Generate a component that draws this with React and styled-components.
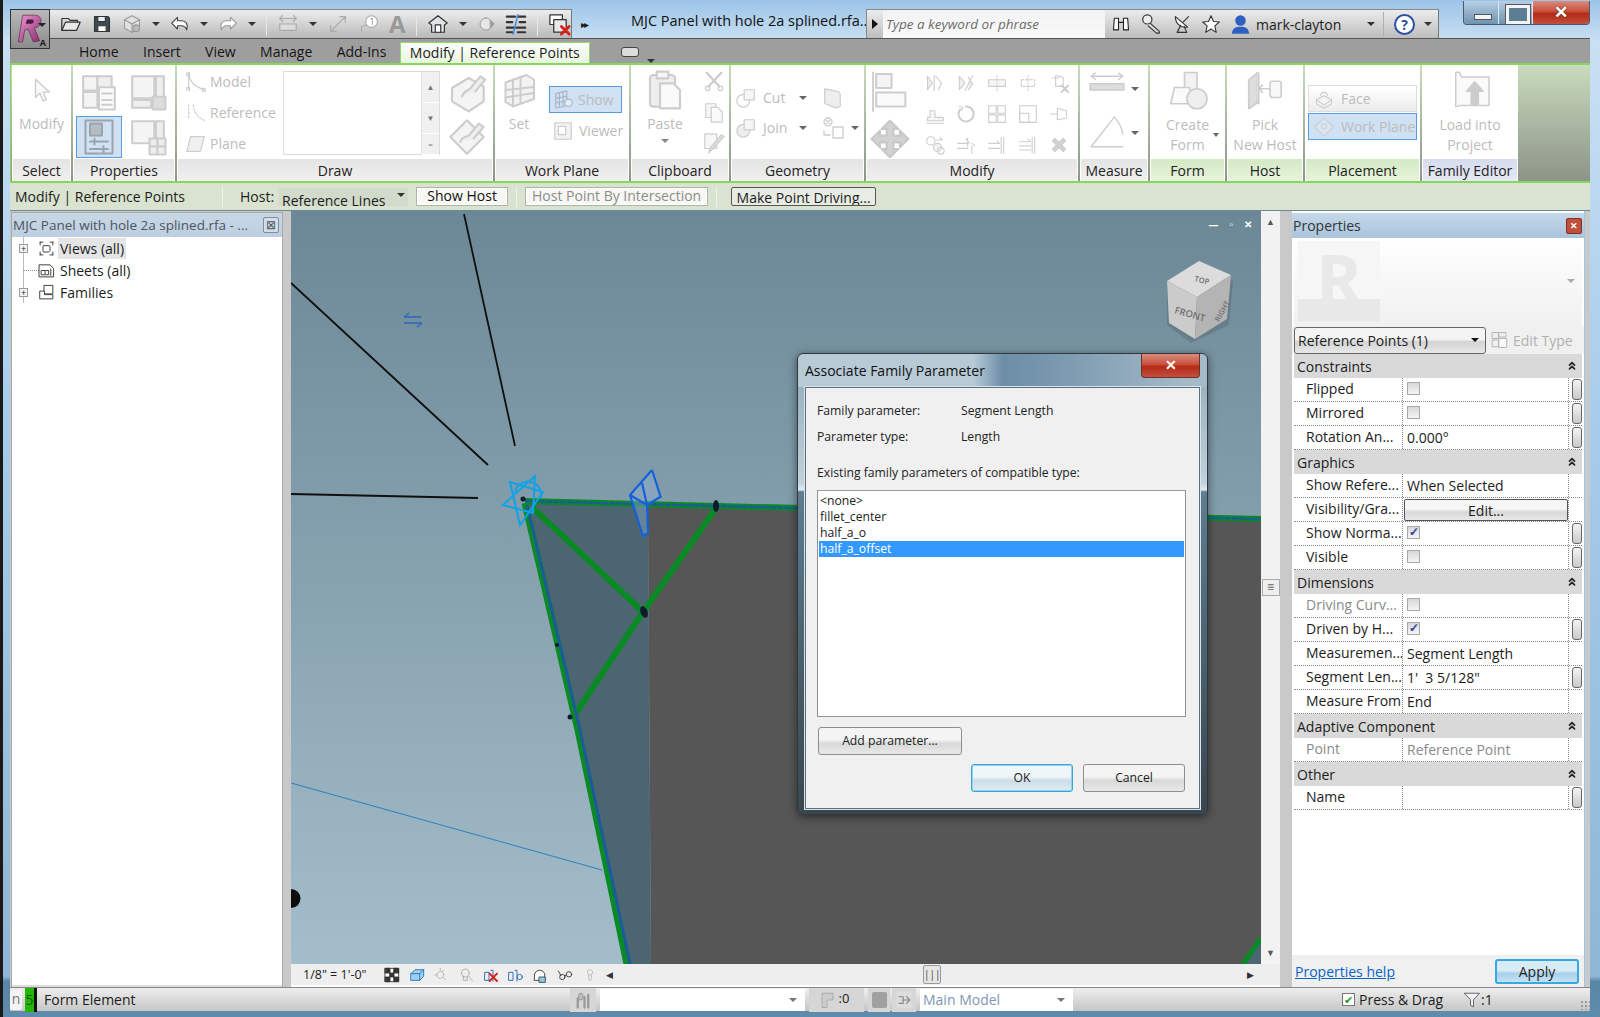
import React from 'react';
import styled, {createGlobalStyle} from 'styled-components';

const Global = createGlobalStyle`
    html, body {
        margin: 0;
        padding: 0;
        background: #6f93ad;
    }
    * {
        box-sizing: border-box;
    }
`

const FONT = '"Open Sans", "Liberation Sans", sans-serif'

const paths = {
    folder: <><path d="M2 19V6h7l2 2h8v3" /><path d="M2 19l4-9h16l-4 9z" fill="#e9e9e9" /></>,
    save: <><path d="M3 3h16l2 2v16H3z" fill="#3d4a52" /><rect x="7" y="3" width="9" height="6" fill="#e8eef2" /><rect x="7" y="14" width="10" height="7" fill="#fff" /></>,
    cube: <><path d="M12 2l9 5v10l-9 5-9-5V7z" fill="#e2e2e2" /><path d="M3 7l9 5 9-5M12 12v10" /><circle cx="17" cy="17" r="4" fill="#bbb" /></>,
    undo: <path d="M9 4L2 11l7 7v-4h5c3 0 5 2 6 5 2-7-1-11-6-11H9z" fill="#fff" />,
    redo: <path d="M15 4l7 7-7 7v-4h-5c-3 0-5 2-6 5-2-7 1-11 6-11h5z" fill="#fff" />,
    dimension: <><path d="M3 6h18M3 6l3-3M3 6l3 3M21 6l-3-3M21 6l-3 3" /><rect x="3" y="12" width="18" height="7" fill="#ddd" /></>,
    diagonal: <><path d="M4 20L20 4M20 4h-6M20 4v6M4 20h6M4 20v-6" /></>,
    tag: <><circle cx="15" cy="9" r="7" fill="#fff" /><path d="M9 13l-6 2v6M14 6l2-1v8" /></>,
    house: <><path d="M2 11l10-8 10 8-3 2v8H5v-8z" fill="#dfe3e6" /><rect x="9" y="13" width="6" height="8" fill="#fff" /></>,
    diamond: <><path d="M12 4a8 8 0 1 0 .1 0z" fill="#e6e6e6" /><path d="M18 7l5 5-5 5z" fill="#999" /></>,
    thin: <><path d="M2 4h9M2 10h6M2 16h9M2 21h6M14 4h8M16 10h6M13 16h9M14 21h8" strokeWidth="2.4" /><path d="M14 2L9 23" stroke="#4a90e2" strokeWidth="1.8" /></>,
    closeAll: <><rect x="2" y="2" width="13" height="10" fill="#fff" /><rect x="6" y="7" width="13" height="13" fill="#e8e8e8" /><path d="M14 14l8 8M22 14l-8 8" stroke="#d8201c" strokeWidth="3" /></>,
    binoculars: <><path d="M4 5h5v14H3zM15 5h5l1 14h-6z" fill="#fff" /><path d="M9 10h6" /></>,
    key: <><circle cx="8" cy="7" r="5" fill="#eee" /><path d="M11 11l10 9v2h-3l-9-8" fill="#ddd" /></>,
    dish: <><path d="M5 3c0 8 6 13 14 12z" fill="#fff" /><path d="M11 13l-4 8h11l-3-7M14 9l6-6" /></>,
    star: <path d="M12 2l3 7 7 .6-5.400 4.700L18.300 22 12 18l-6.300 4 1.700-7.700L2 9.600 9 9z" fill="#fff" />,
    cursor: <path d="M6 2v17l4-4 3 7 3-1-3-7h6z" fill="#fafafa" />,
    typeProps: <><rect x="2" y="2" width="9" height="9" fill="#f4f4f4" /><rect x="11" y="2" width="9" height="9" fill="#eee" /><rect x="2" y="12" width="9" height="10" fill="#f4f4f4" /><rect x="12" y="9" width="10" height="14" fill="#fafafa" /><path d="M14 13h6M14 17h6M14 20h6" /></>,
    panels: <><rect x="2" y="2" width="14" height="14" fill="#f4f4f4" /><rect x="17" y="2" width="5" height="14" fill="#eee" /><rect x="2" y="17" width="12" height="5" fill="#eee" /><rect x="15" y="15" width="8" height="8" fill="#ddd" /></>,
    activeProps: <><rect x="3" y="1" width="18" height="22" fill="#cfe1f3" /><rect x="6" y="3" width="8" height="8" fill="#b4bcc4" /><path d="M6 15h12M9 13v4M6 20h12M15 18v4" stroke="#9aa4ac" /></>,
    panelsGrid: <><rect x="2" y="2" width="14" height="14" fill="#f4f4f4" /><rect x="17" y="2" width="5" height="14" fill="#eee" /><rect x="13" y="13" width="5" height="5" fill="#eee" /><rect x="18" y="13" width="5" height="5" fill="#eee" /><rect x="13" y="18" width="5" height="5" fill="#eee" /><rect x="18" y="18" width="5" height="5" fill="#eee" /></>,
    model: <><path d="M4 3v16M4 3c1 9 6 14 16 17" /><rect x="2" y="2" width="3" height="3" /><rect x="2" y="18" width="3" height="3" /><rect x="19" y="19" width="3" height="3" /></>,
    reference: <><path d="M4 3v16M9 3c1 9 5 14 12 17" strokeDasharray="2 2" /></>,
    plane: <path d="M6 4h15l-4 16H2z" fill="#f0f0f0" strokeDasharray="3 1" />,
    solidPen: <><path d="M3 9l10-6 9 5v9l-9 6-10-6z" fill="#f4f4f4" /><path d="M9 14c2-5 5-3 6-6l5-6 3 2-6 7" fill="#eee" /></>,
    planePen: <><path d="M12 2l10 10-10 10L2 12z" fill="#f4f4f4" /><path d="M8 15c2-5 5-2 6-5l5-6 3 2-6 7" fill="#eee" /></>,
    gridSet: <><path d="M3 7l14-5 5 3v13L8 23l-5-3z" fill="#f2f2f2" /><path d="M8 5v18M13 3v18M3 12l19-2M3 17l19-3" /></>,
    gridShow: <><path d="M3 5l12-3v16L3 21z" fill="#cfe0f0" /><path d="M7 4v16M11 3v16M3 10l12-2M3 15l12-2" /><circle cx="17" cy="15" r="4" fill="#e6eef5" /></>,
    viewer: <><rect x="3" y="3" width="18" height="18" fill="#f2f2f2" /><rect x="7" y="7" width="8" height="9" fill="#fff" /></>,
    paste: <><rect x="3" y="3" width="15" height="19" rx="2" fill="#eee" /><rect x="7" y="1" width="7" height="4" fill="#f6f6f6" /><path d="M9 8h8l4 4v11H9z" fill="#fafafa" /></>,
    cut: <><path d="M4 3l14 15M20 3L6 18" strokeWidth="2.600" /><circle cx="5" cy="20" r="2.500" /><circle cx="19" cy="20" r="2.500" /></>,
    copy: <><rect x="3" y="3" width="11" height="15" fill="#f6f6f6" /><path d="M9 7h7l5 5v11H9z" fill="#fafafa" /></>,
    brush: <><rect x="2" y="2" width="13" height="16" fill="#f6f6f6" /><path d="M23 5L11 18l-5 5 2-6L20 3z" fill="#ddd" /></>,
    cutGeo: <><circle cx="9" cy="15" r="7" fill="#fff" /><rect x="10" y="3" width="11" height="11" fill="#f6f6f6" /></>,
    joinGeo: <><circle cx="9" cy="15" r="7" fill="#eee" /><rect x="10" y="3" width="11" height="11" fill="#f6f6f6" /></>,
    wallFace: <path d="M4 2l15 3 2 3v13l-4 2-13-5z" fill="#eee" />,
    split: <><circle cx="7" cy="6" r="4" fill="#fff" /><path d="M5 4l4 4M9 4l-4 4" /><rect x="12" y="11" width="10" height="11" fill="#fff" /><path d="M3 15v4h6" /></>,
    alignBig: <><path d="M2 1v25" strokeWidth="1.200" /><rect x="4" y="2" width="10" height="9" fill="#f4f4f4" /><rect x="4" y="14" width="19" height="9" fill="#fafafa" /></>,
    move: <path d="M12 1l5 5h-3v4h4V7l5 5-5 5v-3h-4v4h3l-5 5-5-5h3v-4H6v3l-5-5 5-5v3h4V6H7z" fill="#d2d2d2" />,
    mirrorA: <><path d="M11 3v18M3 4l6 8-6 8z" fill="#eee" /><path d="M13 4l7 8-4 8" /></>,
    mirrorB: <><path d="M4 4l7 8-7 8zM20 3L11 21M15 5l5 8-5 7" fill="#eee" /></>,
    splitDash: <><rect x="2" y="8" width="20" height="8" fill="#f6f6f6" /><path d="M12 3v18" strokeDasharray="2 2" /></>,
    splitDot: <><rect x="4" y="8" width="16" height="8" strokeDasharray="3 2" /><path d="M12 3v18" strokeDasharray="2 2" /></>,
    unpin: <><path d="M4 6h8M8 3l9 2v11l-9 0z" fill="#fff" /><path d="M15 15l8 8M23 15l-8 8" strokeWidth="2.400" /></>,
    offset: <><path d="M3 20h19v-4H12v-8H6v8H3z" fill="#f6f6f6" /><path d="M2 23h20" /></>,
    rotate: <><path d="M12 3a9 9 0 1 1-7 3.500" strokeWidth="2.400" /><path d="M4 3l4 1-1 4" /></>,
    array: <><rect x="2" y="2" width="9" height="9" /><rect x="13" y="2" width="9" height="9" /><rect x="2" y="13" width="9" height="9" /><rect x="13" y="13" width="9" height="9" /></>,
    scale: <><rect x="2" y="2" width="20" height="20" /><rect x="2" y="11" width="11" height="11" /></>,
    pin: <><path d="M2 12h8M10 5l11 3v9l-11 2z" fill="#fff" /></>,
    circles: <><circle cx="7" cy="7" r="5" /><circle cx="15" cy="15" r="5" fill="#f2f2f2" /><circle cx="19" cy="19" r="4" /><path d="M14 6h7l-3-3" /></>,
    trimA: <><path d="M2 10h12M2 16h12M12 4l4 6M19 13v9M14 4v10M23 13l-4-3" /></>,
    trimB: <><path d="M20 3v19M17 3v19M2 10h13l-3-3M2 16h13" /></>,
    trimC: <><path d="M20 3v19M17 3v19M2 8h13l-3-3M2 13h13M2 18h13" /></>,
    remove: <path d="M4 7l3-3 5 5 5-5 3 3-5 5 5 5-3 3-5-5-5 5-3-3 5-5z" fill="#d2d2d2" />,
    measure: <><path d="M2 5h30M2 5l4-3M2 5l4 3M32 5l-4-3M32 5l-4 3" /><rect x="1" y="12" width="32" height="6" fill="#ddd" /></>,
    angle: <><path d="M2 30h30M2 30L24 2" /><path d="M24 2c5 5 7 11 8 16" /></>,
    form: <><rect x="14" y="2" width="10" height="15" fill="#f2f2f2" /><path d="M3 27l3-13h12l3 13z" fill="#fafafa" /><circle cx="24" cy="23" r="8" fill="#efefef" /></>,
    host: <><path d="M3 8l7-6v24l-7 5z" fill="#ddd" /><path d="M10 2l1 1v24l-1-1" fill="#eee" /><rect x="20" y="9" width="9" height="13" rx="2" fill="#f8f8f8" /><path d="M20 15h-9l3-3M11 15l3 3" /></>,
    faceIcon: <><path d="M3 13l9-5 9 5-9 6z" fill="#f4f4f4" /><path d="M3 13v5l9 5 9-5v-5M8 8a4 4 0 0 1 8 0" /></>,
    planeIcon: <><path d="M12 1l11 11-11 11L1 12z" fill="#d8e6f4" /><circle cx="12" cy="11" r="3" /></>,
    load: <><path d="M4 1h3l2 4h23v24H8l-4 1z" fill="#fafafa" /><path d="M20 9l7 8h-4v11h-6V17h-4z" fill="#ccc" /></>,
    shadow: <><rect x="2" y="2" width="20" height="20" fill="#fff" /><path d="M2 2h7v7H2zM15 2h7v7h-7zM9 9h6v6H9zM2 15h7v7H2zM15 15h7v7h-7z" fill="#333" /></>,
    box3d: <><path d="M3 10l6-6h13v10l-6 6H3z" fill="#9fd0ee" /><path d="M3 10h13v10M16 10l6-6" /></>,
    sun: <><circle cx="11" cy="12" r="5" strokeDasharray="2 2" /><path d="M11 2v3M3 12h3M16 5l-2 2M19 19l-3-3" /></>,
    bulb: <><circle cx="11" cy="9" r="6" /><path d="M8 14v6h6v-6M16 14l6 7" strokeDasharray="2 1" /></>,
    tempHide: <><path d="M3 8h6v12H3zM12 5h3v16" stroke="#1c5fb0" /><path d="M10 10l11 11M21 10L10 21" stroke="#d8201c" strokeWidth="3" /></>,
    revealHide: <><path d="M3 8h6v12H3zM12 5h3v16" stroke="#1c5fb0" /><circle cx="19" cy="15" r="4" stroke="#1c5fb0" /></>,
    locked: <><path d="M4 10a8 8 0 0 1 15 0v10H4z" fill="#fff" /><rect x="11" y="15" width="9" height="8" fill="#9cc" stroke="#247" /></>,
    glasses: <><circle cx="8" cy="15" r="4" /><circle cx="18" cy="11" r="4" /><path d="M2 6l4 7M12 13l2-1" /></>,
    tack: <><circle cx="12" cy="8" r="4" /><path d="M10 12v6l2 3 2-3v-6" /></>,
    tools: <><rect x="6" y="3" width="6" height="9" rx="3" fill="#bbb" /><path d="M5 10v12M14 8v14M19 5v17" strokeWidth="3" /></>,
    filterSel: <path d="M2 3h20l-8 9v9l-4-2v-7z" fill="#eef2f6" />,
    flag: <><path d="M6 3h14v9h-8v10H6z" fill="#ccc" /></>,
    editTip: <><rect x="3" y="2" width="18" height="20" fill="#ddd" stroke="none" /><path d="M6 8h5v8H6M10 12h9M15 8l4 4-4 4" stroke="#888" /></>,
    tree3d: <><path d="M3 3h4M3 3v4M21 3h-4M21 3v4M3 21h4M3 21v-4M21 21h-4M21 21v-4" /><path d="M8 8h8l1 2v5l-2 2H8l-1-2v-5z" fill="#fff" /></>,
    sheets: <><path d="M2 4h15l5 5v12H2z" fill="#fff" /><rect x="5" y="12" width="5" height="6" /><path d="M11 12h4v6h-4M18 10v9" /></>,
    families: <><rect x="9" y="2" width="12" height="12" fill="#fff" /><path d="M3 10h6v5h12v6H3z" fill="#fff" /></>,
    editType: <><rect x="2" y="2" width="8" height="8" fill="#eee" /><rect x="11" y="2" width="9" height="6" fill="#eee" /><rect x="2" y="12" width="8" height="9" fill="#eee" /><rect x="11" y="10" width="10" height="12" fill="#fafafa" /></>,
    chevrons: <path d="M6 10l6-6 6 6M6 19l6-6 6 6" strokeWidth="4" />
}

const IconSvg = styled.svg`
    flex: none;
    display: block;
    color: ${p => p.$color};
    overflow: visible;
`

function Icon({name, size = 20, box = 24, color = '#cdcdcd'}) {
    return (
        <IconSvg viewBox={`0 0 ${box} ${box}`} width={size} height={size} fill="none" stroke="currentColor" strokeWidth="1.3" strokeLinejoin="round" strokeLinecap="round" $color={color}>
            {paths[name]}
        </IconSvg>
    )
}

const Caret = styled.span`
    flex: none;
    width: 0;
    height: 0;
    border-left: 4px solid transparent;
    border-right: 4px solid transparent;
    border-top: 4px solid ${p => p.$color || '#333'};
`

function App() {
    const groups = [
        {title: 'Constraints', rows: [
            {name: 'Flipped', check: 'off', slot: true},
            {name: 'Mirrored', check: 'off', slot: true},
            {name: 'Rotation An...', value: '0.000°', slot: true}
        ]},
        {title: 'Graphics', rows: [
            {name: 'Show Refere...', value: 'When Selected'},
            {name: 'Visibility/Gra...', edit: true},
            {name: 'Show Norma...', check: 'on', slot: true},
            {name: 'Visible', check: 'off', slot: true}
        ]},
        {title: 'Dimensions', rows: [
            {name: 'Driving Curv...', check: 'off', faded: true},
            {name: 'Driven by H...', check: 'on', slot: true},
            {name: 'Measuremen...', value: 'Segment Length'},
            {name: 'Segment Len...', value: '1\'  3 5/128"', slot: true},
            {name: 'Measure From', value: 'End'}
        ]},
        {title: 'Adaptive Component', rows: [
            {name: 'Point', value: 'Reference Point', faded: true}
        ]},
        {title: 'Other', rows: [
            {name: 'Name', slot: true}
        ]}
    ]

    const modifyIcons = ['mirrorA', 'mirrorB', 'splitDash', 'splitDot', 'unpin', 'offset', 'rotate', 'array', 'scale', 'pin', 'circles', 'trimA', 'trimB', 'trimC', 'remove']
    const tabs = ['Home', 'Insert', 'View', 'Manage', 'Add-Ins']
    const viewIcons = [
        ['shadow', '#333'], ['box3d', '#1c6fb0'], ['sun', '#aaa'], ['bulb', '#aaa'], ['tempHide', '#1c5fb0'],
        ['revealHide', '#1c5fb0'], ['locked', '#333'], ['glasses', '#333'], ['tack', '#bbb']
    ]

    return (
        <Desktop>
            <Global />
            <TitleBar>
                <AppButton>
                    <svg width="28" height="32" viewBox="0 0 26 30">
                        <defs>
                            <linearGradient id="logoR" x1="0" y1="0" x2="1" y2="1">
                                <stop offset="0" stopColor="#e89ad0" />
                                <stop offset="1" stopColor="#8c2c70" />
                            </linearGradient>
                        </defs>
                        <path d="M3 28L7 3h11c5 0 7 3 6 7-1 3-3 5-6 5l5 12-6 1-5-12-3 1-2 11z" fill="url(#logoR)" stroke="#5c1c4c" strokeWidth=".6" />
                        <path d="M11 7h5c2 0 2 4-1 4h-5z" fill="#4c1a3e" />
                    </svg>
                    <AppCaret />
                    <AppLetter>A</AppLetter>
                </AppButton>
                <QuickBar>
                    <Icon name="folder" color="#333" size={22} />
                    <Icon name="save" color="#333" size={20} />
                    <Icon name="cube" color="#999" size={20} />
                    <Caret />
                    <Icon name="undo" color="#444" size={20} />
                    <Caret />
                    <Icon name="redo" color="#999" size={20} />
                    <Caret />
                    <QuickSep />
                    <Icon name="dimension" color="#aaa" size={22} />
                    <Caret />
                    <Icon name="diagonal" color="#aaa" size={22} />
                    <Icon name="tag" color="#aaa" size={20} />
                    <GrayLetter>A</GrayLetter>
                    <QuickSep />
                    <Icon name="house" color="#333" size={22} />
                    <Caret />
                    <Icon name="diamond" color="#999" size={18} />
                    <Icon name="thin" color="#333" size={22} />
                    <QuickSep />
                    <Icon name="closeAll" color="#333" size={23} />
                    <More>▸▸</More>
                </QuickBar>
                <DocTitle>MJC Panel with hole 2a splined.rfa...</DocTitle>
                <SearchBar>
                    <SearchArrow />
                    <SearchInput>Type a keyword or phrase</SearchInput>
                    <SearchTools>
                        <Icon name="binoculars" color="#222" size={20} />
                        <Icon name="key" color="#333" size={22} />
                        <Icon name="dish" color="#333" size={21} />
                        <Icon name="star" color="#333" size={20} />
                        <UserIcon viewBox="0 0 24 24" width="21" height="22">
                            <circle cx="12" cy="8" r="6" fill="#2f5fc0" />
                            <path d="M2 23c1-7 5-8 10-8s9 1 10 8z" fill="#2f5fc0" />
                        </UserIcon>
                        <UserName>mark-clayton</UserName>
                        <Caret />
                        <ToolSep />
                        <HelpBadge>?</HelpBadge>
                        <Caret />
                    </SearchTools>
                </SearchBar>
                <WindowButtons>
                    <WinMin />
                    <WinMax />
                    <WinClose>✕</WinClose>
                </WindowButtons>
            </TitleBar>

            <TabRow>
                {tabs.map(tab => <Tab key={tab}>{tab}</Tab>)}
                <ActiveTab>Modify | Reference Points</ActiveTab>
                <MinimizeRibbon />
                <Caret />
            </TabRow>

            <Ribbon>
                <Panel $w={59} label="Select">
                    <ColumnTool>
                        <IconZone><Icon name="cursor" size={26} /></IconZone>
                        <FadedText>Modify</FadedText>
                    </ColumnTool>
                </Panel>
                <Panel $w={102} label="Properties">
                    <IconGrid>
                        <GridCell><Icon name="typeProps" size={38} /></GridCell>
                        <GridCell><Icon name="panels" size={38} /></GridCell>
                        <ActiveCell><Icon name="activeProps" size={36} color="#9aa4ac" /></ActiveCell>
                        <GridCell><Icon name="panelsGrid" size={38} /></GridCell>
                    </IconGrid>
                </Panel>
                <Panel $w={316} label="Draw">
                    <DrawBody>
                        <DrawList>
                            <SmallTool><Icon name="model" size={22} /><FadedText>Model</FadedText></SmallTool>
                            <SmallTool><Icon name="reference" size={22} /><FadedText>Reference</FadedText></SmallTool>
                            <SmallTool><Icon name="plane" size={22} /><FadedText>Plane</FadedText></SmallTool>
                        </DrawList>
                        <Gallery>
                            <GalleryScroll>
                                <GalleryBtn>▲</GalleryBtn>
                                <GalleryBtn>▼</GalleryBtn>
                                <GalleryBtn $small>=</GalleryBtn>
                            </GalleryScroll>
                        </Gallery>
                        <DrawPens>
                            <Icon name="solidPen" size={40} />
                            <Icon name="planePen" size={40} />
                        </DrawPens>
                    </DrawBody>
                </Panel>
                <Panel $w={134} label="Work Plane">
                    <WorkBody>
                        <ColumnTool>
                            <IconZone><Icon name="gridSet" size={36} /></IconZone>
                            <FadedText>Set</FadedText>
                        </ColumnTool>
                        <WorkSide>
                            <HighlightTool><Icon name="gridShow" size={22} color="#a8b8c8" /><FadedText>Show</FadedText></HighlightTool>
                            <ViewerTool><Icon name="viewer" size={22} /><FadedText>Viewer</FadedText></ViewerTool>
                        </WorkSide>
                    </WorkBody>
                </Panel>
                <Panel $w={98} label="Clipboard">
                    <ClipBody>
                        <ColumnTool>
                            <IconZone><Icon name="paste" size={40} /></IconZone>
                            <FadedText>Paste</FadedText>
                            <PasteCaret $color="#888" />
                        </ColumnTool>
                        <ClipSide>
                            <Icon name="cut" size={22} />
                            <Icon name="copy" size={22} />
                            <Icon name="brush" size={22} />
                        </ClipSide>
                    </ClipBody>
                </Panel>
                <Panel $w={133} label="Geometry">
                    <GeoBody>
                        <GeoRow><Icon name="cutGeo" size={22} /><FadedText>Cut</FadedText><Caret $color="#666" /><Icon name="wallFace" size={22} /></GeoRow>
                        <GeoRow><Icon name="joinGeo" size={22} /><FadedText>Join</FadedText><Caret $color="#666" /><Icon name="split" size={24} /><Caret $color="#666" /></GeoRow>
                    </GeoBody>
                </Panel>
                <Panel $w={212} label="Modify">
                    <ModifyBody>
                        <ModifyBig>
                            <Icon name="alignBig" size={40} box={26} />
                            <Icon name="move" size={40} color="#c8c8c8" />
                        </ModifyBig>
                        <ModifyGrid>
                            {modifyIcons.map(name => <Icon key={name} name={name} size={20} />)}
                        </ModifyGrid>
                    </ModifyBody>
                </Panel>
                <Panel $w={68} label="Measure">
                    <MeasureBody>
                        <MeasureRow><Icon name="measure" size={36} box={34} /><Caret $color="#666" /></MeasureRow>
                        <MeasureRow><Icon name="angle" size={36} box={34} /><Caret $color="#666" /></MeasureRow>
                    </MeasureBody>
                </Panel>
                <Panel $w={75} $tone="green" label="Form">
                    <ColumnTool>
                        <IconZone><Icon name="form" size={40} box={32} /></IconZone>
                        <FadedLines>Create<br />Form</FadedLines>
                        <FormCaret />
                    </ColumnTool>
                </Panel>
                <Panel $w={76} $tone="green" label="Host">
                    <ColumnTool>
                        <IconZone><Icon name="host" size={40} box={32} /></IconZone>
                        <FadedLines>Pick<br />New Host</FadedLines>
                    </ColumnTool>
                </Panel>
                <Panel $w={115} $tone="green" label="Placement">
                    <PlacementBody>
                        <PlaceButton><Icon name="faceIcon" size={20} /><FadedText>Face</FadedText></PlaceButton>
                        <PlaceButton $active><Icon name="planeIcon" size={20} /><FadedText>Work Plane</FadedText></PlaceButton>
                    </PlacementBody>
                </Panel>
                <Panel $w={96} $tone="blue" label="Family Editor">
                    <ColumnTool>
                        <IconZone><Icon name="load" size={38} box={32} /></IconZone>
                        <FadedLines>Load into<br />Project</FadedLines>
                    </ColumnTool>
                </Panel>
            </Ribbon>

            <OptionBar>
                <OptionTitle>Modify | Reference Points</OptionTitle>
                <OptionSep />
                <HostLabel>Host:</HostLabel>
                <HostSelect><ClippedText>Reference Lines</ClippedText><Caret /></HostSelect>
                <OptionButton $w={92}>Show Host</OptionButton>
                <OptionSep />
                <OptionButton $w={183} $disabled>Host Point By Intersection</OptionButton>
                <OptionSep />
                <DrivingButton>Make Point Driving...</DrivingButton>
            </OptionBar>

            <Main>
                <Browser>
                    <BrowserTitle>
                        <span>MJC Panel with hole 2a splined.rfa - ...</span>
                        <BrowserClose>⊠</BrowserClose>
                    </BrowserTitle>
                    <TreeRow $sel><TreeToggle>+</TreeToggle><Icon name="tree3d" size={17} color="#333" /><TreeText $sel>Views (all)</TreeText></TreeRow>
                    <TreeRow><TreeDot /><Icon name="sheets" size={17} color="#333" /><TreeText>Sheets (all)</TreeText></TreeRow>
                    <TreeRow><TreeToggle>+</TreeToggle><Icon name="families" size={17} color="#333" /><TreeText>Families</TreeText></TreeRow>
                </Browser>

                <CanvasArea>
                    <CanvasTop>
                        <Viewport>
                            <Scene viewBox="291 211 970 753" width="970" height="753">
                                <defs>
                                    <linearGradient id="sky" x1="0" y1="0" x2="0" y2="1">
                                        <stop offset="0" stopColor="#6c8896" />
                                        <stop offset="1" stopColor="#a4bdca" />
                                    </linearGradient>
                                </defs>
                                <rect x="291" y="211" width="970" height="753" fill="url(#sky)" />
                                <polygon points="527,503 648,505 651,964 627,964" fill="#4b6571" />
                                <polygon points="648,505 1261,519 1261,964 651,964" fill="#565656" />
                                <polygon points="1243,964 1261,938 1261,964" fill="#4b6571" />
                                <path d="M1243 964L1261 938" stroke="#0a8a24" strokeWidth="5" />
                                <path d="M291 283L488 465M464 214L515 446M291 494L478 498" stroke="#101010" strokeWidth="1.800" fill="none" />
                                <path d="M291 783L602 870" stroke="#2f7fc0" strokeWidth="1" fill="none" />
                                <path d="M291 889a9 9 0 0 1 0 19z" fill="#0c0c0c" />
                                <path d="M404 317l5-4M404 317h17M422 323l-5 4M422 323h-18" stroke="#2a66c0" strokeWidth="1.300" fill="none" />
                                <g fill="none" stroke="#0a8a24" strokeWidth="6">
                                    <path d="M525 501L716 506L1261 519" />
                                    <path d="M525 503L578 730L627 964" strokeWidth="7" />
                                    <path d="M532 507L643 612" />
                                    <path d="M716 508L643 612L574 716" />
                                </g>
                                <g fill="none" stroke="#1d5a9c" strokeWidth="2.500">
                                    <path d="M525 501L716 506L1261 519" strokeDasharray="6 1" />
                                    <path d="M527 505L580 730L630 964" strokeWidth="3" />
                                </g>
                                <g fill="#0c1c2c">
                                    <ellipse cx="644" cy="612" rx="3.500" ry="6" transform="rotate(-20 644 612)" />
                                    <ellipse cx="716" cy="506" rx="3" ry="6" />
                                    <circle cx="570" cy="717" r="2.500" />
                                    <circle cx="557" cy="645" r="2" />
                                    <circle cx="523" cy="499" r="2.500" />
                                </g>
                                <g fill="none" stroke="#12a2e6" strokeWidth="2">
                                    <path d="M510 482L543 492L520 525z" />
                                    <path d="M535 476L503 505L533 513z" />
                                    <path d="M515 492a13 13 0 0 1 26 6" />
                                </g>
                                <polygon points="652,470 661,498 648,505 648,533 643,536 630,495" fill="#8fb4d8" opacity="0.4" />
                                <g fill="none" stroke="#1560dc" strokeWidth="2.200">
                                    <path d="M652 470L630 495L643 536L648 533M652 470L661 498M642 483L647 505M630 495L647 505L660 497M647 505L648 533" />
                                </g>
                            </Scene>
                            <CubeWidget viewBox="0 0 76 90" width="76" height="90">
                                <path d="M6 26L46 8l26 16-4 44-38 18-24-18z" fill="#000" opacity=".12" />
                                <path d="M6 24L38 4l32 14-34 22z" fill="#dcdcdc" />
                                <path d="M6 24l30 16-2 42L8 66z" fill="#cbcbcb" />
                                <path d="M36 40l34-22-4 44-32 20z" fill="#b4b4b4" />
                            </CubeWidget>
                            <CubeFace $x={1202} $y={280} $r={14}>TOP</CubeFace>
                            <CubeFace $x={1190} $y={314} $r={16} $big>FRONT</CubeFace>
                            <CubeFace $x={1222} $y={311} $r={-60}>RIGHT</CubeFace>
                            <ViewControls>
                                <span>—</span><span>▫</span><span>✕</span>
                            </ViewControls>
                        </Viewport>
                        <VScroll>
                            <ScrollArrow>▲</ScrollArrow>
                            <SplitHandle>≡</SplitHandle>
                            <ScrollArrow>▼</ScrollArrow>
                        </VScroll>
                    </CanvasTop>
                    <ViewBar>
                        <ScaleText>1/8" = 1'-0"</ScaleText>
                        <ViewIcons>
                            {viewIcons.map(([name, color]) => <Icon key={name} name={name} size={16} color={color} />)}
                        </ViewIcons>
                        <BarArrow>◀</BarArrow>
                        <HThumb>|||</HThumb>
                        <BarArrow $end>▶</BarArrow>
                    </ViewBar>
                </CanvasArea>

                <Props>
                    <PropsTitle>
                        <span>Properties</span>
                        <PropsClose>✕</PropsClose>
                    </PropsTitle>
                    <Preview>
                        <Thumb>R</Thumb>
                        <Caret $color="#aaa" />
                    </Preview>
                    <TypeRow>
                        <TypeSelect><span>Reference Points (1)</span><Caret $color="#111" /></TypeSelect>
                        <EditType><Icon name="editType" size={18} color="#b5b5b5" /><span>Edit Type</span></EditType>
                    </TypeRow>
                    {groups.map(group => (
                        <React.Fragment key={group.title}>
                            <GroupHead><span>{group.title}</span><Icon name="chevrons" size={10} color="#222" /></GroupHead>
                            {group.rows.map(row => (
                                <PropRow key={row.name}>
                                    <PropName $faded={row.faded}>{row.name}</PropName>
                                    <PropValue $faded={row.faded}>
                                        {row.check && <CheckBox $on={row.check === 'on'} />}
                                        {row.value}
                                        {row.edit && <EditButton>Edit...</EditButton>}
                                    </PropValue>
                                    <PropSlot>{row.slot && <SlotButton />}</PropSlot>
                                </PropRow>
                            ))}
                        </React.Fragment>
                    ))}
                    <PropsFooter>
                        <HelpLink>Properties help</HelpLink>
                        <ApplyButton>Apply</ApplyButton>
                    </PropsFooter>
                </Props>
            </Main>

            <StatusBar>
                <StatusN>n</StatusN>
                <StatusGreen>5</StatusGreen>
                <StatusText>Form Element</StatusText>
                <StatusTool $w={26}><Icon name="tools" size={18} color="#999" /></StatusTool>
                <StatusField $w={205}><Caret $color="#777" /></StatusField>
                <StatusTool $w={55} $gap={4}><Icon name="flag" size={18} color="#aaa" /><Count>:0</Count></StatusTool>
                <StatusTool $w={22} $gap={2}><GraySquare /></StatusTool>
                <StatusTool $w={24} $gap={4}><Icon name="editTip" size={20} /></StatusTool>
                <StatusField $w={153}><ModelName>Main Model</ModelName><Caret $color="#777" /></StatusField>
                <PressDrag>
                    <GreenCheck>✔</GreenCheck>
                    <span>Press &amp; Drag</span>
                </PressDrag>
                <FilterBox><Icon name="filterSel" size={18} color="#666" /><span>:1</span></FilterBox>
                <Grip />
            </StatusBar>

            <Dialog>
                <DialogTitle>
                    <span>Associate Family Parameter</span>
                    <DialogClose>✕</DialogClose>
                </DialogTitle>
                <DialogBody>
                    <InfoRow><InfoKey>Family parameter:</InfoKey><span>Segment Length</span></InfoRow>
                    <InfoRow><InfoKey>Parameter type:</InfoKey><span>Length</span></InfoRow>
                    <ListCaption>Existing family parameters of compatible type:</ListCaption>
                    <ListBox>
                        <ListItem>&lt;none&gt;</ListItem>
                        <ListItem>fillet_center</ListItem>
                        <ListItem>half_a_o</ListItem>
                        <ListItem $sel>half_a_offset</ListItem>
                    </ListBox>
                    <AddButton>Add parameter...</AddButton>
                    <DialogActions>
                        <DialogButton $primary>OK</DialogButton>
                        <DialogButton>Cancel</DialogButton>
                    </DialogActions>
                </DialogBody>
            </Dialog>
        </Desktop>
    )
}

function Panel({$w, $tone, label, children}) {
    return (
        <PanelBox $w={$w}>
            <PanelBody>{children}</PanelBody>
            <PanelLabel $tone={$tone}>{label}</PanelLabel>
        </PanelBox>
    )
}

export default App

const Desktop = styled.div`
    position: relative;
    width: 1600px;
    height: 1017px;
    overflow: hidden;
    display: flex;
    flex-direction: column;
    padding: 0 10px 6px 10px;
    font-family: ${FONT};
    font-size: 14px;
    color: #1c1c1c;
    background:
        linear-gradient(90deg, #1a1a1a 0 3px, transparent 3px),
        linear-gradient(180deg, #9cc4e8 0, #c9e0f3 4%, #a8cdec 40%, #8fb6d6 96%, #5a86a6 96.500%, #5f8cac 100%);
`

const TitleBar = styled.div`
    position: relative;
    flex: none;
    height: 38px;
    display: flex;
    align-items: flex-end;
    padding-left: 40px;
`

const AppButton = styled.div`
    position: absolute;
    left: 0;
    top: 9px;
    width: 40px;
    height: 40px;
    padding: 2px 0 0 4px;
    background: linear-gradient(180deg, #b9b9b9, #8b8b8b);
    border: 1px solid #333;
    z-index: 2;
`

const AppCaret = styled.span`
    position: absolute;
    right: 3px;
    top: 13px;
    border-left: 4px solid transparent;
    border-right: 4px solid transparent;
    border-top: 4px solid #222;
`

const AppLetter = styled.span`
    position: absolute;
    right: 3px;
    bottom: -1px;
    font-size: 9px;
    font-weight: 700;
`

const QuickBar = styled.div`
    flex: none;
    width: 522px;
    height: 29px;
    display: flex;
    align-items: center;
    gap: 10px;
    padding-left: 10px;
    background: linear-gradient(180deg, #ededed, #b9b9b9);
    border-top: 1px solid #888;
    border-right: 1px solid #777;
`

const QuickSep = styled.span`
    flex: none;
    width: 1px;
    height: 24px;
    background: #a0a0a0;
    border-right: 1px solid #e8e8e8;
`

const GrayLetter = styled.span`
    font-size: 24px;
    font-weight: 700;
    color: #999;
    line-height: 1;
`

const More = styled.span`
    font-size: 10px;
    letter-spacing: -2px;
`

const DocTitle = styled.div`
    flex: none;
    width: 294px;
    height: 38px;
    padding: 12px 0 0 59px;
    font-size: 14.5px;
    line-height: 18px;
    color: #111;
    white-space: nowrap;
`

const SearchBar = styled.div`
    flex: none;
    width: 573px;
    height: 29px;
    display: flex;
    background: linear-gradient(180deg, #ececec, #bdbdbd);
    border-top: 1px solid #888;
    border-right: 1px solid #777;
`

const SearchArrow = styled.span`
    flex: none;
    width: 17px;
    position: relative;
    border-left: 1px solid #888;
    &::after {
        content: '';
        position: absolute;
        left: 5px;
        top: 9px;
        border-top: 5px solid transparent;
        border-bottom: 5px solid transparent;
        border-left: 6px solid #111;
    }
`

const SearchInput = styled.div`
    flex: none;
    width: 222px;
    padding-left: 3px;
    background: linear-gradient(180deg, #f2f2f2, #fafafa);
    font-style: italic;
    font-size: 13.5px;
    line-height: 28px;
    color: #6b6b6b;
`

const SearchTools = styled.div`
    flex: 1;
    display: flex;
    align-items: center;
    gap: 9px;
    padding-left: 6px;
`

const UserIcon = styled.svg`
    flex: none;
`

const UserName = styled.span`
    flex: none;
    width: 102px;
    margin-left: -4px;
    white-space: nowrap;
`

const ToolSep = styled.span`
    width: 1px;
    height: 24px;
    margin: 0 -1px;
    background: #b0b0b0;
`

const HelpBadge = styled.span`
    flex: none;
    width: 21px;
    height: 21px;
    margin-left: 2px;
    border: 2px solid #2c4fa8;
    border-radius: 50%;
    background: #fff;
    color: #2c4fa8;
    font-weight: 700;
    font-size: 14px;
    line-height: 17px;
    text-align: center;
`

const WindowButtons = styled.div`
    flex: none;
    align-self: flex-start;
    margin-left: 24px;
    width: 127px;
    height: 24px;
    margin-top: 1px;
    display: flex;
    border: 1px solid #4a5a68;
    border-top: none;
    border-radius: 0 0 4px 4px;
    overflow: hidden;
`

const WinMin = styled.div`
    flex: none;
    width: 35px;
    position: relative;
    background: linear-gradient(180deg, #b6cfe4, #6f93b0);
    border-right: 1px solid #dce8f2;
    &::after {
        content: '';
        position: absolute;
        left: 10px;
        bottom: 4px;
        width: 16px;
        height: 4px;
        background: #f4f4f4;
        border: 1px solid #556;
    }
`

const WinMax = styled.div`
    flex: none;
    width: 34px;
    position: relative;
    background: linear-gradient(180deg, #b6cfe4, #6f93b0);
    border-right: 1px solid #dce8f2;
    &::after {
        content: '';
        position: absolute;
        left: 7px;
        top: 4px;
        width: 18px;
        height: 13px;
        background: #5d7d95;
        border: 3px solid #f4f4f4;
        outline: 1px solid #556;
    }
`

const WinClose = styled.div`
    flex: 1;
    background: linear-gradient(180deg, #dc8a7c 0, #c8513c 45%, #b52a14 55%, #c05040 100%);
    color: #fff;
    font-weight: 700;
    font-size: 17px;
    line-height: 22px;
    text-align: center;
    text-shadow: 0 0 2px #333;
`

const TabRow = styled.div`
    flex: none;
    height: 25px;
    display: flex;
    align-items: flex-end;
    padding-left: 57px;
    background: #9e9e9e;
    border-top: 1px solid #555;
`

const Tab = styled.div`
    padding: 0 12px;
    margin-right: 0.4px;
    height: 21px;
    line-height: 20px;
    color: #141414;
    white-space: nowrap;
`

const ActiveTab = styled.div`
    width: 190px;
    height: 21px;
    margin-left: 1px;
    line-height: 20px;
    text-align: center;
    border: 1px solid #8fdc6a;
    border-bottom: none;
    background: linear-gradient(180deg, #ffffff, #e6f4de);
    white-space: nowrap;
`

const MinimizeRibbon = styled.span`
    width: 18px;
    height: 10px;
    margin: 0 8px 6px 31px;
    border: 1px solid #444;
    border-radius: 3px;
    background: #dcdcdc;
`

const Ribbon = styled.div`
    flex: none;
    height: 120px;
    display: flex;
    gap: 2px;
    padding-left: 1px;
    border-top: 2px solid #86d85c;
    border-bottom: 2px solid #86d85c;
    border-left: 1px solid #86d85c;
    background: linear-gradient(180deg, #c9dbbc, #8d9488);
`

const PanelBox = styled.div`
    flex: none;
    width: ${p => p.$w}px;
    display: flex;
    flex-direction: column;
    background: #fff;
`

const PanelBody = styled.div`
    flex: 1;
    min-height: 0;
    display: flex;
    justify-content: center;
    position: relative;
`

const PanelLabel = styled.div`
    flex: none;
    height: 22px;
    margin: 0 1px;
    text-align: center;
    line-height: 24px;
    white-space: nowrap;
    color: #222;
    background: ${p => p.$tone === 'green'
        ? 'linear-gradient(180deg, #d4e9c4, #e6f4dc)'
        : p.$tone === 'blue' ? 'linear-gradient(180deg, #d6dcee, #e6e9f5)' : 'linear-gradient(180deg, #e4e4e4, #f0f0f0)'};
`

const FadedText = styled.span`
    color: #bcbcbc;
    white-space: nowrap;
    line-height: 18px;
`

const FadedLines = styled.div`
    color: #bcbcbc;
    text-align: center;
    line-height: 20px;
    white-space: nowrap;
`

const ColumnTool = styled.div`
    position: relative;
    display: flex;
    flex-direction: column;
    align-items: center;
`

const IconZone = styled.div`
    flex: none;
    height: 50px;
    display: flex;
    align-items: center;
    justify-content: center;
`

const PasteCaret = styled(Caret)`
    margin-top: 6px;
`

const FormCaret = styled.span`
    position: absolute;
    right: -10px;
    top: 68px;
    border-left: 3px solid transparent;
    border-right: 3px solid transparent;
    border-top: 4px solid #666;
`

const IconGrid = styled.div`
    display: grid;
    grid-template-columns: 46px 48px;
    grid-template-rows: 45px 42px;
    gap: 2px;
    align-content: start;
    padding-top: 4px;
`

const GridCell = styled.div`
    display: flex;
    align-items: center;
    justify-content: center;
`

const ActiveCell = styled(GridCell)`
    background: #cfe1f3;
    border: 1px solid #5b9bdc;
`

const DrawBody = styled.div`
    display: flex;
    width: 100%;
    padding: 6px 0 0 8px;
`

const DrawList = styled.div`
    flex: none;
    width: 98px;
    display: flex;
    flex-direction: column;
    gap: 9px;
`

const SmallTool = styled.div`
    display: flex;
    align-items: center;
    gap: 3px;
    height: 22px;
`

const Gallery = styled.div`
    flex: none;
    width: 157px;
    height: 84px;
    display: flex;
    justify-content: flex-end;
    border: 1px solid #dcdcdc;
    background: #fff;
`

const GalleryScroll = styled.div`
    width: 18px;
    display: flex;
    flex-direction: column;
    border-left: 1px solid #e4e4e4;
    background: #f0f0f0;
`

const GalleryBtn = styled.div`
    flex: ${p => p.$small ? '0 0 20px' : '1'};
    font-size: 8px;
    color: #777;
    text-align: center;
    line-height: ${p => p.$small ? '20px' : '30px'};
    border-bottom: 1px solid #fff;
`

const DrawPens = styled.div`
    flex: 1;
    display: flex;
    flex-direction: column;
    align-items: center;
    padding-top: 2px;
    gap: 4px;
`

const WorkBody = styled.div`
    display: flex;
    width: 100%;
    padding-left: 6px;
    gap: 10px;
`

const WorkSide = styled.div`
    display: flex;
    flex-direction: column;
    padding-top: 21px;
    margin-left: 2px;
    gap: 3px;
`

const HighlightTool = styled.div`
    width: 73px;
    height: 27px;
    display: flex;
    align-items: center;
    gap: 3px;
    padding-left: 3px;
    background: #cfe1f3;
    border: 1px solid #5b9bdc;
`

const ViewerTool = styled.div`
    display: flex;
    align-items: center;
    gap: 5px;
    padding-left: 3px;
    height: 30px;
`

const ClipBody = styled.div`
    display: flex;
    gap: 18px;
    width: 100%;
    padding-left: 14px;
`

const ClipSide = styled.div`
    display: flex;
    flex-direction: column;
    gap: 9px;
    padding-top: 5px;
`

const GeoBody = styled.div`
    display: flex;
    flex-direction: column;
    gap: 8px;
    width: 100%;
    padding: 22px 0 0 4px;
`

const GeoRow = styled.div`
    display: flex;
    align-items: center;
    gap: 6px;
    height: 22px;
    & > span:nth-child(2) {
        width: 30px;
    }
    & > span:nth-child(3) {
        margin-right: 8px;
    }
`

const ModifyBody = styled.div`
    display: flex;
    width: 100%;
    padding-left: 4px;
`

const ModifyBig = styled.div`
    flex: none;
    width: 44px;
    display: flex;
    flex-direction: column;
    gap: 8px;
    padding-top: 6px;
`

const ModifyGrid = styled.div`
    display: grid;
    grid-template-columns: repeat(5, 31px);
    grid-auto-rows: 31px;
    justify-items: center;
    align-items: center;
    padding: 2px 0 0 5px;
`

const MeasureBody = styled.div`
    display: flex;
    flex-direction: column;
    gap: 8px;
    padding-top: 6px;
`

const MeasureRow = styled.div`
    display: flex;
    align-items: center;
    gap: 6px;
`

const PlacementBody = styled.div`
    display: flex;
    flex-direction: column;
    gap: 1px;
    padding-top: 20px;
    width: 109px;
`

const PlaceButton = styled.div`
    height: 27px;
    display: flex;
    align-items: center;
    gap: 7px;
    padding-left: 5px;
    background: ${p => p.$active ? '#cfe1f3' : 'linear-gradient(180deg, #ffffff, #ececec)'};
    border: 1px solid ${p => p.$active ? '#5b9bdc' : '#dedede'};
`

const OptionBar = styled.div`
    flex: none;
    height: 28px;
    display: flex;
    align-items: center;
    gap: 8px;
    padding-left: 5px;
    background: #d9e3d0;
    border-bottom: 1px solid #6c8a96;
    white-space: nowrap;
`

const OptionTitle = styled.span`
    flex: none;
    width: 199px;
`

const OptionSep = styled.span`
    flex: none;
    width: 1px;
    height: 20px;
    background: #aab4a4;
    border-right: 1px solid #eef2ea;
`

const HostLabel = styled.span`
    margin-left: 9px;
`

const HostSelect = styled.div`
    width: 129px;
    height: 18px;
    margin-left: -3px;
    overflow: hidden;
    display: flex;
    align-items: flex-start;
    justify-content: space-between;
    padding: 0 3px;
    background: #d2dacb;
    & > span:last-child {
        margin-top: 5px;
    }
`

const ClippedText = styled.span`
    line-height: 25px;
`

const OptionButton = styled.div`
    flex: none;
    width: ${p => p.$w}px;
    height: 19px;
    line-height: 16px;
    text-align: center;
    background: #f7f7f4;
    border: 1px solid #aeb4aa;
    color: ${p => p.$disabled ? '#8d8d8d' : '#111'};
    box-shadow: inset 0 0 0 1px #fff;
`

const DrivingButton = styled.div`
    flex: none;
    width: 145px;
    height: 19px;
    margin-left: 6px;
    overflow: hidden;
    line-height: 20px;
    text-align: center;
    border: 1px solid #555;
    border-radius: 2px;
    background: #e8ece4;
`

const Main = styled.div`
    flex: none;
    height: 776px;
    display: flex;
    background: #c9c9c9;
`

const Browser = styled.div`
    flex: none;
    width: 270px;
    margin-top: 2px;
    margin-left: 2px;
    padding: 0 2px 2px 2px;
    background: #fff;
    border-bottom: 2px solid #ddd;
    outline: 1px solid #a8a8a8;
`

const BrowserTitle = styled.div`
    height: 24px;
    margin: 0 -2px;
    padding-left: 1px;
    display: flex;
    align-items: center;
    justify-content: space-between;
    background: linear-gradient(180deg, #c9d8e6, #bccee0);
    color: #4c5560;
    font-size: 13.5px;
    white-space: nowrap;
    overflow: hidden;
`

const BrowserClose = styled.span`
    flex: none;
    width: 16px;
    height: 16px;
    margin-right: 3px;
    line-height: 14px;
    text-align: center;
    font-size: 12px;
    border: 1px solid #7d8ea0;
    border-radius: 2px;
    background: #d4dee8;
`

const TreeRow = styled.div`
    height: 22px;
    display: flex;
    align-items: center;
    padding-left: 5px;
    gap: 3px;
    background-image: linear-gradient(#bbb, #bbb);
    background-size: 1px 100%;
    background-repeat: no-repeat;
    background-position: 9px 0;
`

const TreeToggle = styled.span`
    flex: none;
    width: 9px;
    height: 9px;
    border: 1px solid #999;
    background: #f4f4f4;
    font-size: 9px;
    line-height: 7px;
    text-align: center;
    margin-right: 7px;
`

const TreeDot = styled.span`
    flex: none;
    width: 16px;
    height: 1px;
    margin-left: 4px;
    margin-right: -4px;
    border-top: 1px dotted #999;
`

const TreeText = styled.span`
    padding: 0 2px;
    line-height: 21px;
    background: ${p => p.$sel ? '#e5e5e5' : 'transparent'};
`

const CanvasArea = styled.div`
    flex: none;
    width: 989px;
    margin-left: 9px;
    display: flex;
    flex-direction: column;
`

const CanvasTop = styled.div`
    flex: none;
    height: 753px;
    display: flex;
`

const Viewport = styled.div`
    position: relative;
    flex: none;
    width: 970px;
    overflow: hidden;
`

const Scene = styled.svg`
    position: absolute;
    inset: 0;
`

const CubeWidget = styled.svg`
    position: absolute;
    left: 870px;
    top: 46px;
`

const CubeFace = styled.span`
    position: absolute;
    left: ${p => p.$x - 291}px;
    top: ${p => p.$y - 211}px;
    transform: translate(-50%, -50%) rotate(${p => p.$r}deg);
    font-size: ${p => p.$big ? '9.5px' : '7.5px'};
    font-weight: 600;
    color: #6f6f6f;
`

const ViewControls = styled.div`
    position: absolute;
    right: 9px;
    top: 6px;
    display: flex;
    gap: 11px;
    font-size: 10px;
    color: #fff;
    font-weight: 700;
`

const VScroll = styled.div`
    flex: none;
    width: 19px;
    display: flex;
    flex-direction: column;
    justify-content: space-between;
    align-items: center;
    background: #f2f2f2;
`

const ScrollArrow = styled.span`
    font-size: 9px;
    line-height: 22px;
    color: #555;
`

const SplitHandle = styled.span`
    width: 18px;
    height: 17px;
    border: 1px solid #aaa;
    background: #eee;
    font-size: 12px;
    line-height: 14px;
    text-align: center;
    color: #666;
`

const ViewBar = styled.div`
    flex: none;
    height: 23px;
    display: flex;
    align-items: center;
    padding-left: 12px;
    background: #eeeeee;
    border-bottom: 2px solid #fff;
`

const ScaleText = styled.span`
    flex: none;
    width: 81px;
    font-size: 12.5px;
    white-space: nowrap;
`

const ViewIcons = styled.div`
    flex: none;
    width: 222px;
    display: flex;
    align-items: center;
    gap: 8.700px;
`

const BarArrow = styled.span`
    flex: none;
    font-size: 9px;
    color: #333;
    margin-left: ${p => p.$end ? '306px' : '0'};
`

const HThumb = styled.span`
    flex: none;
    width: 18px;
    height: 19px;
    margin-left: 310px;
    border: 1px solid #999;
    border-radius: 2px;
    background: #e6e6e6;
    font-size: 10px;
    line-height: 16px;
    text-align: center;
    color: #444;
`

const Props = styled.div`
    flex: none;
    width: 293px;
    margin-left: 12px;
    display: flex;
    flex-direction: column;
    background: #fff;
    border-right: 1px solid #9cc8e8;
`

const PropsTitle = styled.div`
    flex: none;
    height: 25px;
    margin-top: 2px;
    padding-left: 1px;
    display: flex;
    align-items: center;
    justify-content: space-between;
    background: linear-gradient(180deg, #c6d8ea, #aac4dc);
    color: #333;
`

const PropsClose = styled.span`
    width: 16px;
    height: 16px;
    margin-right: 2px;
    background: #c0503c;
    border: 1px solid #803020;
    border-radius: 2px;
    color: #fff;
    font-size: 9px;
    font-weight: 700;
    line-height: 14px;
    text-align: center;
`

const Preview = styled.div`
    flex: none;
    height: 88px;
    margin: 0 2px;
    padding: 4px 7px 6px 4px;
    display: flex;
    align-items: center;
    justify-content: space-between;
    background: linear-gradient(180deg, #ffffff, #f0f0f0);
`

const Thumb = styled.div`
    width: 82px;
    height: 80px;
    font-size: 70px;
    font-weight: 700;
    line-height: 74px;
    color: #e9e9e9;
    text-align: center;
    background: linear-gradient(180deg, #f6f6f6 72%, #e8e8e8 72%);
`

const TypeRow = styled.div`
    flex: none;
    height: 28px;
    padding: 0 2px;
    display: flex;
    align-items: center;
    gap: 5px;
    background: #f0f0f0;
`

const TypeSelect = styled.div`
    flex: none;
    width: 192px;
    height: 27px;
    display: flex;
    align-items: center;
    justify-content: space-between;
    padding: 0 6px 0 3px;
    border: 1px solid #666;
    border-radius: 3px;
    background: linear-gradient(180deg, #f4f4f4 45%, #d4d4d4 55%, #e8e8e8);
`

const EditType = styled.div`
    display: flex;
    align-items: center;
    gap: 4px;
    color: #b0b0b0;
    white-space: nowrap;
`

const GroupHead = styled.div`
    flex: none;
    height: 24px;
    margin: 0 2px;
    padding: 0 5px 0 3px;
    display: flex;
    align-items: center;
    justify-content: space-between;
    background: #d9d9d9;
    white-space: nowrap;
`

const PropRow = styled.div`
    flex: none;
    height: 24px;
    margin: 0 2px;
    display: grid;
    grid-template-columns: 109px 166px 15px;
    border-bottom: 1px dotted #888;
    background: #fff;
`

const PropName = styled.div`
    padding-left: 12px;
    line-height: 22px;
    white-space: nowrap;
    overflow: hidden;
    color: ${p => p.$faded ? '#8a8a8a' : '#1c1c1c'};
    border-right: 1px dotted #888;
`

const PropValue = styled.div`
    padding-left: 4px;
    display: flex;
    align-items: center;
    white-space: pre;
    color: ${p => p.$faded ? '#8a8a8a' : '#1c1c1c'};
    border-right: 1px dotted #888;
`

const PropSlot = styled.div`
    display: flex;
    align-items: center;
    justify-content: center;
`

const SlotButton = styled.span`
    width: 10px;
    height: 21px;
    border: 1px solid #666;
    border-radius: 3px;
    background: linear-gradient(180deg, #f4f4f4, #c8c8c8);
`

const CheckBox = styled.span`
    position: relative;
    width: 13px;
    height: 13px;
    margin-bottom: 3px;
    border: 1px solid #a8a8a8;
    background: linear-gradient(180deg, #d8d8d8, #f4f4f4);
    &::after {
        content: '${p => p.$on ? '✓' : ''}';
        position: absolute;
        left: 1px;
        top: -4px;
        font-size: 12px;
        font-weight: 700;
        color: #2c3fa0;
    }
`

const EditButton = styled.div`
    flex: none;
    width: 164px;
    height: 22px;
    margin-left: -3px;
    text-align: center;
    line-height: 21px;
    border: 1px solid #555;
    border-radius: 2px;
    background: linear-gradient(180deg, #f6f6f6 45%, #d8d8d8 60%, #e8e8e8);
`

const PropsFooter = styled.div`
    flex: none;
    margin-top: auto;
    height: 32px;
    padding: 0 5px 0 3px;
    display: flex;
    align-items: center;
    justify-content: space-between;
    background: #f0f0f0;
`

const HelpLink = styled.a`
    color: #0a64c8;
    text-decoration: underline;
`

const ApplyButton = styled.div`
    width: 84px;
    height: 25px;
    line-height: 22px;
    text-align: center;
    border: 2px solid #36a8e4;
    border-radius: 3px;
    background: linear-gradient(180deg, #d8ecf8 45%, #a8d0ea 60%, #c8e2f4);
`

const StatusBar = styled.div`
    flex: none;
    height: 24px;
    display: flex;
    align-items: center;
    background: linear-gradient(180deg, #eeeeee, #c6c6c6);
    border-top: 1px solid #888;
`

const StatusN = styled.span`
    flex: none;
    width: 12px;
    height: 20px;
    line-height: 18px;
    text-align: center;
    background: #f4f4f4;
    color: #777;
    border-radius: 2px;
`

const StatusGreen = styled.span`
    flex: none;
    width: 12px;
    height: 24px;
    margin-left: 3px;
    line-height: 24px;
    text-align: center;
    background: #22b800;
    color: #145c00;
    border-right: 3px solid #111;
`

const StatusText = styled.span`
    flex: none;
    width: 533px;
    padding-left: 7px;
`

const StatusTool = styled.div`
    flex: none;
    width: ${p => p.$w}px;
    height: 24px;
    margin-right: ${p => p.$gap === undefined ? 4 : p.$gap}px;
    display: flex;
    align-items: center;
    justify-content: center;
    gap: 3px;
    background: #d6d6d6;
`

const Count = styled.span`
    font-size: 13px;
    margin: -3px 6px 0 0;
`

const GraySquare = styled.span`
    width: 15px;
    height: 16px;
    border-radius: 2px;
    background: #a0a0a0;
`

const StatusField = styled.div`
    flex: none;
    width: ${p => p.$w}px;
    height: 22px;
    margin-right: 4px;
    padding: 0 8px 0 3px;
    display: flex;
    align-items: center;
    justify-content: flex-end;
    background: #fff;
`

const ModelName = styled.span`
    margin-right: auto;
    color: #7d96b4;
`

const PressDrag = styled.div`
    flex: none;
    margin-left: 265px;
    display: flex;
    align-items: center;
    gap: 4px;
    white-space: nowrap;
`

const GreenCheck = styled.span`
    width: 13px;
    height: 13px;
    border: 1px solid #777;
    background: #fff;
    color: #1f9a1f;
    font-size: 11px;
    line-height: 11px;
    text-align: center;
`

const FilterBox = styled.div`
    flex: none;
    margin-left: 20px;
    display: flex;
    align-items: flex-end;
`

const Grip = styled.span`
    flex: none;
    width: 10px;
    height: 10px;
    margin: 10px 0 0 auto;
    background-image: radial-gradient(#999 1px, transparent 1.500px);
    background-size: 4px 4px;
`

const Dialog = styled.div`
    position: absolute;
    left: 797px;
    top: 353px;
    width: 411px;
    height: 462px;
    padding: 0 7px 5px 7px;
    display: flex;
    flex-direction: column;
    border: 1px solid #30383e;
    border-radius: 6px;
    background: linear-gradient(180deg, #8ea8b8 0, #c0d2dc 28%, #dfe9ef 29.500%, #5d7d90 30%, #3a464e 100%);
    box-shadow: 0 2px 8px rgba(0, 0, 0, .5);
    font-size: 12.2px;
    color: #222;
`

const DialogTitle = styled.div`
    flex: none;
    position: relative;
    height: 33px;
    margin: 0 -7px;
    padding: 8px 0 0 7px;
    border-radius: 6px 6px 0 0;
    font-size: 14px;
    line-height: 18px;
    background: linear-gradient(90deg, #b7cad6 0, #b7cad6 43%, #6d8ea8 50%, #7c9ab0 65%, #a4bac8 95%);
    color: #111;
`

const DialogClose = styled.span`
    position: absolute;
    right: 7px;
    top: 0;
    width: 59px;
    height: 24px;
    border: 1px solid #703028;
    border-top: none;
    border-radius: 0 0 4px 4px;
    background: linear-gradient(180deg, #dc8a7c 0, #c8513c 45%, #b52a14 55%, #c05040 100%);
    color: #fff;
    font-size: 14px;
    font-weight: 700;
    line-height: 22px;
    text-align: center;
`

const DialogBody = styled.div`
    flex: 1;
    position: relative;
    display: flex;
    flex-direction: column;
    padding: 13px 14px 0 11px;
    background: #f0f0f0;
    border: 1px solid #5b6f7c;
    box-shadow: 0 0 0 1px #d8e4ec;
`

const InfoRow = styled.div`
    height: 26px;
    line-height: 20px;
    display: flex;
`

const InfoKey = styled.span`
    flex: none;
    width: 144px;
`

const ListCaption = styled.div`
    margin-top: 10px;
    height: 27px;
    line-height: 20px;
    white-space: nowrap;
`

const ListBox = styled.div`
    flex: none;
    width: 369px;
    height: 227px;
    padding: 2px 1px;
    background: #fff;
    border: 1px solid #8c9298;
    border-top-color: #9a9a9a;
`

const ListItem = styled.div`
    height: 16px;
    padding-left: 1px;
    line-height: 15px;
    color: ${p => p.$sel ? '#fff' : '#222'};
    background: ${p => p.$sel ? '#3399ff' : 'transparent'};
`

const AddButton = styled.div`
    flex: none;
    width: 144px;
    height: 28px;
    margin: 10px 0 0 1px;
    line-height: 26px;
    text-align: center;
    border: 1px solid #8e8e8e;
    border-radius: 3px;
    background: linear-gradient(180deg, #f4f4f4 45%, #d9d9d9 60%, #e8e8e8);
`

const DialogActions = styled.div`
    position: absolute;
    right: 14px;
    bottom: 16px;
    display: flex;
    gap: 10px;
`

const DialogButton = styled.div`
    width: 102px;
    height: 28px;
    line-height: 26px;
    text-align: center;
    border: 1px solid ${p => p.$primary ? '#3aa2d8' : '#8e8e8e'};
    border-radius: 3px;
    box-shadow: ${p => p.$primary ? 'inset 0 0 0 1px #8fd4f0' : 'none'};
    background: ${p => p.$primary
        ? 'linear-gradient(180deg, #eef6fa 45%, #ccdde8 60%, #e0ecf2)'
        : 'linear-gradient(180deg, #f4f4f4 45%, #d9d9d9 60%, #e8e8e8)'};
`
